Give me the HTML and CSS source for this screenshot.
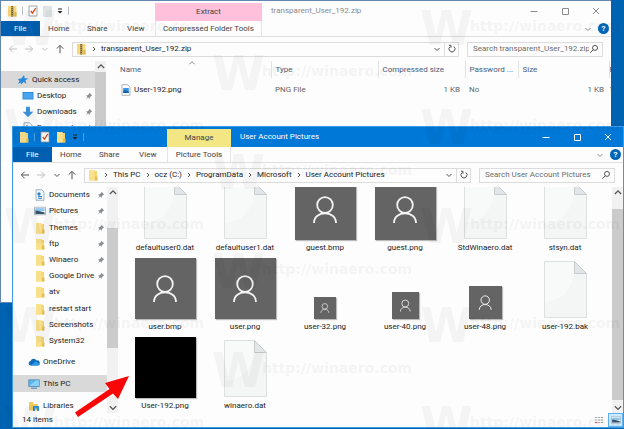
FILE: index.html
```html
<!DOCTYPE html>
<html lang="en">
<head>
    <meta charset="UTF-8">
    <meta name="viewport" content="width=device-width, initial-scale=1.0">
    <title>User Account Pictures</title>
    <link rel="stylesheet" href="styles.css">
</head>
<body>

    <!-- shared icons -->
    <svg class="sprite" aria-hidden="true">
        <symbol id="folder" viewBox="0 0 10 12">
            <path d="M1 1h5.5v1H9v9.500H1z" fill="#f3d673"/>
            <path d="M1 1h5.500v10.500H1z" fill="#f9e08b"/>
            <path d="M7 7.500h2.500v4H7z" fill="#e6bd55"/>
        </symbol>
        <symbol id="zip" viewBox="0 0 10 12">
            <path d="M1 1h8.500v10.500H1z" fill="#f6da7a"/>
            <path d="M4 1h2.500v10.500H4z" fill="#b99a55"/>
            <path d="M5.200 1v10.500" stroke="#4f4a42" stroke-width="1.200" stroke-dasharray="1 1"/>
            <path d="M7.500 7h2v4.500h-2z" fill="#e0b243"/>
        </symbol>
        <symbol id="check" viewBox="0 0 10 12">
            <path d="M1 1h8v10H1z" fill="#fff" stroke="#8c949c" stroke-width=".8"/>
            <path d="M2.800 6l1.700 2.200L7.800 3" fill="none" stroke="#dc4a1c" stroke-width="1.300"/>
        </symbol>
        <symbol id="pin" viewBox="0 0 8 8">
            <path d="M4.500.8l2.700 2.700-.8.300-1.500 1.500-.2 1.500-1.500-1.400L.8 7.500l1.700-2.400L1 3.500l1.700-.2 1.500-1.500z" fill="#8a8f94"/>
        </symbol>
        <symbol id="star" viewBox="0 0 12 12">
            <path d="M7 1l.8 3.200 3.400.3-2.800 2 1 3.300L6.500 8 4 10.500l-.4-2L.8 10l1.700-2.800L1 5l3.300-.6z" fill="#2b8ad8"/>
        </symbol>
        <symbol id="monitor" viewBox="0 0 12 10">
            <path d="M.5 1h11v7.500H.5z" fill="#2f8fdf"/>
            <path d="M1.500 2h9v5.500h-9z" fill="#49a5ee"/>
        </symbol>
        <symbol id="down" viewBox="0 0 12 12">
            <path d="M4 .8h4v5h3.300L6 11.200.7 5.800H4z" fill="#3d95df"/>
        </symbol>
        <symbol id="doc" viewBox="0 0 10 12">
            <path d="M1 .7h5.800L9 3v8.300H1z" fill="#eef4fa" stroke="#8796a4" stroke-width=".7"/>
            <path d="M3 4h2v2H3zM3 7.500h4M3 9.300h4" fill="#2b83cd" stroke="#2b83cd"/>
        </symbol>
        <symbol id="image" viewBox="0 0 10 12">
            <path d="M1 .7h5.800L9 3v8.300H1z" fill="#fff" stroke="#8796a4" stroke-width=".7"/>
            <path d="M2.200 4h5.600v5H2.200z" fill="#3a96e0"/>
            <path d="M2.200 9V7l2-1 3.600 1.500V9z" fill="#1565ab"/>
        </symbol>
        <symbol id="picture" viewBox="0 0 12 10">
            <path d="M.5 1.200h11v7.600H.5z" fill="#fff" stroke="#8b99a6" stroke-width=".7"/>
            <path d="M1.400 2.200h9.200v3H1.400z" fill="#8cc5ee"/>
            <path d="M1.400 4.500l3.600.4 5.600 1.700v1.500H1.400z" fill="#35536f"/>
        </symbol>
        <symbol id="cloud" viewBox="0 0 12 10">
            <path d="M2.500 8.500a2.300 2.300 0 0 1 0-4.500 3.300 3.300 0 0 1 6-.6A2.500 2.500 0 0 1 9.800 8.500z" fill="#0f6cbd"/>
            <path d="M3 8.500l4.500-4.300 3.700 2.500a1.200 1.200 0 0 1-.9 1.800z" fill="#2a96e3"/>
        </symbol>
        <symbol id="pc" viewBox="0 0 12 10">
            <path d="M.7.8h10.600v6.700H.7z" fill="#56b7ec" stroke="#4f7ea4" stroke-width=".7"/>
            <path d="M1.200 7L8 1.200h2.900V7z" fill="#8ad1f5"/>
            <path d="M3 9.200h6" stroke="#3c84bd"/>
        </symbol>
        <symbol id="library" viewBox="0 0 12 12">
            <path d="M1 2h4v2h5v6.500H1z" fill="#f0cb5b"/>
            <path d="M5 6h6v5H9V8.500H7V11H5z" fill="#2f8fdf"/>
        </symbol>
        <symbol id="left" viewBox="0 0 10 10"><path d="M9 5H1.500M4.700 1.700L1.400 5l3.300 3.300" class="line"/></symbol>
        <symbol id="right" viewBox="0 0 10 10"><path d="M1 5h7.500M5.300 1.700L8.600 5 5.300 8.300" class="line"/></symbol>
        <symbol id="up" viewBox="0 0 10 10"><path d="M5 9.300V1.500M1.700 4.700L5 1.400l3.300 3.300" class="line"/></symbol>
        <symbol id="chev" viewBox="0 0 8 8"><path d="M1.500 3L4 5.500 6.500 3" class="line"/></symbol>
        <symbol id="chev-up" viewBox="0 0 8 8"><path d="M1.500 5.200L4 2.700l2.500 2.500" class="line"/></symbol>
        <symbol id="crumb" viewBox="0 0 8 8"><path d="M3 2l2 2-2 2" class="line"/></symbol>
        <symbol id="drop" viewBox="0 0 8 8"><path d="M2 2h4" class="line"/><path d="M1.500 4h5L4 6.500z" fill="currentColor"/></symbol>
        <symbol id="refresh" viewBox="0 0 10 10"><path d="M6.800 2.500a3 3 0 1 1-3.600 0M2 1.300h2v2.400" class="line"/></symbol>
        <symbol id="lens" viewBox="0 0 10 10"><path d="M8.500 3.900a2.500 2.500 0 1 1-5 0 2.500 2.500 0 0 1 5 0M4.200 5.800L1.200 8.800" class="line"/></symbol>
        <symbol id="min" viewBox="0 0 10 10"><path d="M1.500 5.500h7" class="line"/></symbol>
        <symbol id="max" viewBox="0 0 10 10"><path d="M2.500 2.500h6v6h-6z" class="line"/></symbol>
        <symbol id="close" viewBox="0 0 10 10"><path d="M2 2l6 6M8 2L2 8" class="line"/></symbol>
        <symbol id="user" viewBox="0 0 61 61">
            <path d="M0 0h61v61H0z" fill="#646464"/>
            <circle cx="30" cy="26" r="7.800" fill="none" stroke="#f4f4f4" stroke-width="1.800"/>
            <path d="M19 44c0-13 22-13 22 0" fill="none" stroke="#f4f4f4" stroke-width="1.800"/>
        </symbol>
        <symbol id="file" viewBox="0 0 43 57">
            <path d="M.5.500h30l12 12v44H.5z" fill="#f8f9f9" stroke="#dde0e0"/>
            <path d="M1 41C16 40 28 30 30 13h12v43H1z" fill="#f4f6f6"/>
            <path d="M30.500.500v12h12z" fill="#e3e6e8" stroke="#c6cbce"/>
        </symbol>
    </svg>

    <section class="window back">
        <header class="titlebar">
            <div class="quick">
                <svg class="icon"><use href="#zip"/></svg>
                <i class="sep"></i>
                <svg class="icon"><use href="#check"/></svg>
                <span class="blank"></span>
                <svg class="small"><use href="#drop"/></svg>
                <i class="sep"></i>
            </div>
            <div class="context pink">Extract</div>
            <h1>transparent_User_192.zip</h1>
            <div class="caption">
                <button aria-label="Minimize"><svg><use href="#min"/></svg></button>
                <button aria-label="Maximize"><svg><use href="#max"/></svg></button>
                <button aria-label="Close"><svg><use href="#close"/></svg></button>
            </div>
        </header>
        <div class="ribbon">
            <div class="tabs">
                <button class="file-tab">File</button>
                <button>Home</button>
                <button>Share</button>
                <button>View</button>
            </div>
            <button class="tools wide">Compressed Folder Tools</button>
            <div class="help-area">
                <svg class="small"><use href="#chev"/></svg>
                <button class="help" aria-label="Help">?</button>
            </div>
        </div>
        <div class="address-row">
            <div class="nav">
                <button class="off" aria-label="Back"><svg><use href="#left"/></svg></button>
                <button class="off" aria-label="Forward"><svg><use href="#right"/></svg></button>
                <button class="recent off" aria-label="Recent"><svg><use href="#chev"/></svg></button>
                <button aria-label="Up"><svg><use href="#up"/></svg></button>
            </div>
            <div class="address">
                <svg class="icon"><use href="#zip"/></svg>
                <svg class="crumb"><use href="#crumb"/></svg>
                <a href="#">transparent_User_192.zip</a>
                <button class="history" aria-label="History"><svg><use href="#chev"/></svg></button>
                <button class="refresh" aria-label="Refresh"><svg><use href="#refresh"/></svg></button>
            </div>
            <label class="search">
                <input type="text" placeholder="Search transparent_User_192.zip" aria-label="Search">
                <svg><use href="#lens"/></svg>
            </label>
        </div>
        <div class="body">
            <nav class="sidebar">
                <a class="root selected" href="#"><svg class="icon"><use href="#star"/></svg>Quick access</a>
                <a href="#"><svg class="icon"><use href="#monitor"/></svg>Desktop<svg class="pin"><use href="#pin"/></svg></a>
                <a href="#"><svg class="icon"><use href="#down"/></svg>Downloads<svg class="pin"><use href="#pin"/></svg></a>
                <a href="#"><svg class="icon"><use href="#doc"/></svg>Documents<svg class="pin"><use href="#pin"/></svg></a>
            </nav>
            <div class="scrollbar">
                <svg><use href="#chev-up"/></svg>
                <div class="thumb"></div>
                <svg><use href="#chev"/></svg>
            </div>
            <main>
                <table class="details">
                    <colgroup>
                        <col>
                        <col class="c-type">
                        <col class="c-comp">
                        <col class="c-pass">
                        <col class="c-size">
                        <col class="c-ratio">
                    </colgroup>
                    <thead>
                        <tr>
                            <th>Name<svg class="sort"><use href="#chev-up"/></svg></th>
                            <th>Type</th>
                            <th>Compressed size</th>
                            <th>Password ...</th>
                            <th>Size</th>
                            <th>R</th>
                        </tr>
                    </thead>
                    <tbody>
                        <tr>
                            <td class="name"><svg class="icon"><use href="#image"/></svg>User-192.png</td>
                            <td>PNG File</td>
                            <td class="num">1 KB</td>
                            <td>No</td>
                            <td class="num">1 KB</td>
                            <td>1</td>
                        </tr>
                    </tbody>
                </table>
            </main>
        </div>
    </section>

    <section class="window front">
        <header class="titlebar">
            <div class="quick">
                <svg class="icon"><use href="#folder"/></svg>
                <i class="sep"></i>
                <svg class="icon"><use href="#check"/></svg>
                <svg class="icon"><use href="#folder"/></svg>
                <svg class="small"><use href="#drop"/></svg>
                <i class="sep"></i>
            </div>
            <div class="context yellow">Manage</div>
            <h1>User Account Pictures</h1>
            <div class="caption">
                <button aria-label="Minimize"><svg><use href="#min"/></svg></button>
                <button aria-label="Maximize"><svg><use href="#max"/></svg></button>
                <button aria-label="Close"><svg><use href="#close"/></svg></button>
            </div>
        </header>
        <div class="ribbon">
            <div class="tabs">
                <button class="file-tab">File</button>
                <button>Home</button>
                <button>Share</button>
                <button>View</button>
            </div>
            <button class="tools">Picture Tools</button>
            <div class="help-area">
                <svg class="small"><use href="#chev"/></svg>
                <button class="help" aria-label="Help">?</button>
            </div>
        </div>
        <div class="address-row">
            <div class="nav">
                <button aria-label="Back"><svg><use href="#left"/></svg></button>
                <button class="off" aria-label="Forward"><svg><use href="#right"/></svg></button>
                <button class="recent" aria-label="Recent"><svg><use href="#chev"/></svg></button>
                <button aria-label="Up"><svg><use href="#up"/></svg></button>
            </div>
            <div class="address">
                <svg class="icon"><use href="#folder"/></svg>
                <svg class="crumb"><use href="#crumb"/></svg>
                <a href="#">This PC</a>
                <svg class="crumb"><use href="#crumb"/></svg>
                <a href="#">ocz (C:)</a>
                <svg class="crumb"><use href="#crumb"/></svg>
                <a href="#">ProgramData</a>
                <svg class="crumb"><use href="#crumb"/></svg>
                <a href="#">Microsoft</a>
                <svg class="crumb"><use href="#crumb"/></svg>
                <a href="#">User Account Pictures</a>
                <button class="history" aria-label="History"><svg><use href="#chev"/></svg></button>
                <button class="refresh" aria-label="Refresh"><svg><use href="#refresh"/></svg></button>
            </div>
            <label class="search">
                <input type="text" placeholder="Search User Account Pictures" aria-label="Search">
                <svg><use href="#lens"/></svg>
            </label>
        </div>
        <div class="body">
            <nav class="sidebar">
                <div class="pinned">
                    <a href="#"><svg class="icon"><use href="#doc"/></svg>Documents<svg class="pin"><use href="#pin"/></svg></a>
                    <a href="#"><svg class="icon"><use href="#picture"/></svg>Pictures<svg class="pin"><use href="#pin"/></svg></a>
                    <a href="#"><svg class="icon"><use href="#folder"/></svg>Themes<svg class="pin"><use href="#pin"/></svg></a>
                    <a href="#"><svg class="icon"><use href="#folder"/></svg>ftp<svg class="pin"><use href="#pin"/></svg></a>
                    <a href="#"><svg class="icon"><use href="#folder"/></svg>Winaero<svg class="pin"><use href="#pin"/></svg></a>
                    <a href="#"><svg class="icon"><use href="#folder"/></svg>Google Drive<svg class="pin"><use href="#pin"/></svg></a>
                    <a href="#"><svg class="icon"><use href="#folder"/></svg>atv</a>
                    <a href="#"><svg class="icon"><use href="#folder"/></svg>restart start</a>
                    <a href="#"><svg class="icon"><use href="#folder"/></svg>Screenshots</a>
                    <a href="#"><svg class="icon"><use href="#folder"/></svg>System32</a>
                </div>
                <a class="root" href="#"><svg class="icon"><use href="#cloud"/></svg>OneDrive</a>
                <a class="root selected" href="#"><svg class="icon"><use href="#pc"/></svg>This PC</a>
                <a class="root" href="#"><svg class="icon"><use href="#library"/></svg>Libraries</a>
            </nav>
            <div class="scrollbar">
                <svg><use href="#chev-up"/></svg>
                <div class="thumb"></div>
                <svg><use href="#chev"/></svg>
            </div>
            <main>
                <ul class="files">
                    <li><svg class="file"><use href="#file"/></svg><span>defaultuser0.dat</span></li>
                    <li><svg class="file"><use href="#file"/></svg><span>defaultuser1.dat</span></li>
                    <li><svg class="photo"><use href="#user"/></svg><span>guest.bmp</span></li>
                    <li><svg class="photo"><use href="#user"/></svg><span>guest.png</span></li>
                    <li><svg class="file"><use href="#file"/></svg><span>StdWinaero.dat</span></li>
                    <li><svg class="file"><use href="#file"/></svg><span>stsyn.dat</span></li>
                    <li><svg class="photo"><use href="#user"/></svg><span>user.bmp</span></li>
                    <li><svg class="photo"><use href="#user"/></svg><span>user.png</span></li>
                    <li><svg class="photo s32"><use href="#user"/></svg><span>user-32.png</span></li>
                    <li><svg class="photo s40"><use href="#user"/></svg><span>user-40.png</span></li>
                    <li><svg class="photo s48"><use href="#user"/></svg><span>user-48.png</span></li>
                    <li><svg class="file"><use href="#file"/></svg><span>user-192.bak</span></li>
                    <li><div class="photo black"></div><span>User-192.png</span></li>
                    <li><svg class="file"><use href="#file"/></svg><span>winaero.dat</span></li>
                </ul>
            </main>
            <div class="scrollbar long">
                <svg><use href="#chev-up"/></svg>
                <div class="thumb"></div>
                <svg><use href="#chev"/></svg>
            </div>
        </div>
        <footer>
            <span>14 items</span>
            <div class="views">
                <button aria-label="Details">
                    <svg viewBox="0 0 12 10"><path d="M1 2h3M1 5h3" stroke="#8a9aa8"/><path d="M1 8h3" stroke="#d9634f" stroke-width="1.500"/><path d="M5 2h2M8 2h3M5 5h2M8 5h3M5 8h2M8 8h3" stroke="#8a8a8a"/></svg>
                </button>
                <button class="active" aria-label="Large icons"><svg viewBox="0 0 12 10"><use href="#picture"/></svg></button>
            </div>
        </footer>
    </section>

    <!-- arrow pointing at the new picture -->
    <svg class="arrow" viewBox="0 0 56 44" aria-hidden="true">
        <path d="M55 2L31 9l4.500 6L1 38.500 4 43l35-23.500 5 5.500z" fill="#fb0606"/>
    </svg>

    <svg class="watermark" aria-hidden="true">
        <defs>
            <pattern id="mark" width="416" height="99" patternUnits="userSpaceOnUse">
                <g id="stamp">
                    <text x="4" y="45" class="mark-w">W</text>
                    <text x="54" y="31" class="mark-url">http://winaero.com</text>
                </g>
                <use href="#stamp" x="-208" y="45"/>
                <use href="#stamp" x="-208" y="-54"/>
                <use href="#stamp" x="208" y="45"/>
                <use href="#stamp" x="208" y="-54"/>
            </pattern>
        </defs>
        <rect width="100%" height="100%" fill="url(#mark)"/>
    </svg>

</body>
</html>
```

FILE: styles.css
```css
* {
    box-sizing: border-box;
}
body {
    margin: 0;
    height: 100vh;
    position: relative;
    overflow: hidden;
    background-color: #0063b1;
    font-family: Roboto, "Open Sans", sans-serif;
    font-size: 8px;
    line-height: 12px;
    color: #1c1c1c;
}
button {
    font: inherit;
    color: inherit;
    padding: 0;
    border: none;
    background: none;
    display: flex;
    align-items: center;
    justify-content: center;
    white-space: nowrap;
}
a {
    color: inherit;
    text-decoration: none;
    white-space: nowrap;
}
svg {
    width: 10px;
    height: 10px;
    flex: none;
    display: block;
}
.sprite {
    position: absolute;
    width: 0;
    height: 0;
}
.line {
    fill: none;
    stroke: currentColor;
    stroke-width: 1;
}
.icon {
    width: 12px;
    height: 12px;
}
.small {
    width: 8px;
    height: 8px;
}

/* windows */
.window {
    position: absolute;
    display: flex;
    flex-direction: column;
    background-color: #fdfdfd;
}
.back {
    top: 0;
    left: 0;
    right: 13px;
    height: 303px;
    border: 1px solid #6288b2;
    border-right: none;
}
.front {
    top: 126px;
    left: 12px;
    right: 0;
    bottom: 1px;
    border: 1px solid #3f9ae6;
}

/* title bar */
.titlebar {
    height: 20px;
    flex: none;
    display: flex;
    align-items: center;
}
.front .titlebar {
    background-color: #0078d7;
    color: #fff;
}
.quick {
    width: 154px;
    display: flex;
    align-items: center;
    gap: 4px;
    padding-left: 5px;
}
.sep {
    width: 1px;
    height: 8px;
    background-color: #b4bcc4;
}
.front .sep {
    background-color: #4b9fe0;
}
.quick .small {
    color: #222;
}
.blank {
    width: 9px;
    height: 11px;
    background-color: #dfe2e4;
}
.context {
    align-self: flex-end;
    height: 18px;
    line-height: 18px;
    text-align: center;
    color: #444;
}
.pink {
    width: 107px;
    background-color: #ffc0dc;
}
.yellow {
    width: 64px;
    background-color: #f3e684;
}
h1 {
    flex: 1;
    margin: 0;
    padding-left: 9px;
    font-size: 8px;
    font-weight: normal;
}
.back h1 {
    color: #8c8c8c;
}
.caption {
    display: flex;
}
.caption button {
    width: 31px;
    height: 20px;
}
.back .caption {
    color: #8c8c8c;
}

/* ribbon */
.ribbon {
    height: 16px;
    flex: none;
    display: flex;
    border-bottom: 1px solid #dedfe0;
    color: #444;
}
.tabs {
    width: 154px;
    display: flex;
}
.tabs button {
    flex: 1;
}
.tabs .file-tab {
    background-color: #005fb0;
    color: #fff;
}
.tools {
    width: 64px;
    border-left: 1px solid #e4e4e4;
    border-right: 1px solid #e4e4e4;
}
.wide {
    width: 107px;
}
.help-area {
    margin-left: auto;
    display: flex;
    align-items: center;
    gap: 6px;
    padding-right: 2px;
    color: #8a8a8a;
}
.help {
    width: 11px;
    height: 11px;
    border-radius: 50%;
    background-color: #0067b8;
    color: #fff;
    font-weight: bold;
}

/* address bar */
.address-row {
    height: 24px;
    flex: none;
    display: flex;
    align-items: center;
    gap: 8px;
    padding-right: 8px;
}
.nav {
    width: 64px;
    display: flex;
    align-items: center;
    justify-content: space-between;
    padding-left: 7px;
    margin-right: -1px;
    color: #555;
}
.nav .recent svg {
    width: 8px;
    height: 8px;
}
.nav .off {
    color: #c0c0c0;
}
.address {
    flex: 1;
    height: 15px;
    display: flex;
    align-items: center;
    border: 1px solid #dcdcdc;
    padding-left: 2px;
}
.crumb {
    width: 8px;
    height: 8px;
    margin: 0 3px;
    color: #555;
}
.history {
    margin-left: auto;
    width: 15px;
    height: 13px;
    color: #555;
}
.history svg {
    width: 8px;
    height: 8px;
}
.refresh {
    width: 14px;
    height: 13px;
    border-left: 1px solid #dcdcdc;
    color: #555;
}
.search {
    width: 136px;
    height: 15px;
    display: flex;
    align-items: center;
    border: 1px solid #dcdcdc;
    padding: 0 3px 0 5px;
    color: #555;
}
.search input {
    flex: 1;
    min-width: 0;
    padding: 0;
    border: none;
    outline: none;
    background: none;
    font: inherit;
}
.search input::placeholder {
    color: #6d6d6d;
}

/* sidebar */
.body {
    flex: 1;
    min-height: 0;
    display: flex;
    overflow: hidden;
}
.sidebar {
    width: 94px;
    flex: none;
}
.back .sidebar {
    padding-top: 10px;
}
.sidebar a {
    height: 16px;
    display: flex;
    align-items: center;
    gap: 3px;
    padding: 0 2px 0 21px;
}
.sidebar .root {
    height: 17px;
    margin-bottom: 5px;
    padding-left: 15px;
}
.back .sidebar .root {
    margin-bottom: 0;
    padding-left: 16px;
}
.sidebar .selected {
    background-color: #d9d9d9;
}
.pinned {
    height: 162px;
    margin-bottom: 4px;
    display: flex;
    flex-direction: column;
}
.pinned a {
    flex: 1;
}
.pin {
    width: 8px;
    height: 8px;
    margin-left: auto;
}
.scrollbar {
    width: 11px;
    flex: none;
    display: flex;
    flex-direction: column;
    align-items: center;
    background-color: #f1f1f1;
    color: #555;
}
.scrollbar svg {
    width: 10px;
    height: 11px;
}
.thumb {
    flex: 1;
    width: 100%;
    background-color: #cbcbcb;
}
.front .thumb {
    margin: 30px 0 54px;
}
.front .long .thumb {
    margin: 11px 0 2px;
}

/* details list */
main {
    flex: 1;
    min-width: 0;
    overflow: hidden;
}
.details {
    width: 100%;
    table-layout: fixed;
    border-collapse: collapse;
    color: #666;
}
.c-type {
    width: 107px;
}
.c-comp {
    width: 87px;
}
.c-pass {
    width: 53px;
}
.c-size {
    width: 91px;
}
.c-ratio {
    width: 2px;
}
th, td {
    height: 20px;
    padding: 0 5px 0 4px;
    text-align: left;
    font-weight: normal;
    white-space: nowrap;
    overflow: hidden;
}
th {
    height: 17px;
    color: #4c607a;
    border-right: 1px solid #e3e3e3;
}
th:first-child {
    position: relative;
    padding-left: 14px;
}
th:last-child, td:last-child {
    padding: 0;
    border: none;
}
.details thead::after, .details tbody::before {
    content: "";
    display: block;
    height: 1px;
}
.sort {
    position: absolute;
    top: -2px;
    left: 50%;
    width: 8px;
    height: 8px;
    color: #888;
}
.name {
    display: flex;
    align-items: center;
    gap: 2px;
    padding-left: 14px;
    color: #1c1c1c;
}
.num {
    text-align: right;
}

/* icon grid, scrolled down a little */
.files {
    margin: -8px 0 0;
    padding: 0 0 0 7px;
    list-style: none;
    display: grid;
    grid-template-columns: repeat(auto-fill, 80px);
    grid-auto-rows: 79px;
}
.files li {
    display: flex;
    flex-direction: column;
    align-items: center;
    justify-content: flex-end;
    padding-bottom: 2px;
}
.files span {
    line-height: 16px;
}
.file {
    width: 43px;
    height: 57px;
    margin-bottom: 1px;
}
.photo {
    width: 61px;
    height: 61px;
    box-shadow: 1px 1px 1px #bbb;
}
.s32 {
    width: 22px;
    height: 22px;
}
.s40 {
    width: 27px;
    height: 27px;
}
.s48 {
    width: 33px;
    height: 33px;
}
.black {
    background-color: #000;
}

/* status bar */
footer {
    height: 14px;
    flex: none;
    display: flex;
    align-items: center;
    justify-content: space-between;
    padding-left: 9px;
}
.views {
    display: flex;
    gap: 2px;
}
.views button {
    width: 15px;
    height: 14px;
}
.views .active {
    background-color: #cce8ff;
    border: 1px solid #5fb2f2;
}

.arrow {
    position: absolute;
    top: 374px;
    left: 74px;
    width: 56px;
    height: 44px;
}
.watermark {
    position: absolute;
    top: 0;
    left: 0;
    width: 100%;
    height: 100%;
    opacity: 0.03;
    pointer-events: none;
}
.mark-w {
    font: bold 48px "DejaVu Sans", sans-serif;
}
.mark-url {
    font: bold 14px "DejaVu Sans", sans-serif;
}
```
